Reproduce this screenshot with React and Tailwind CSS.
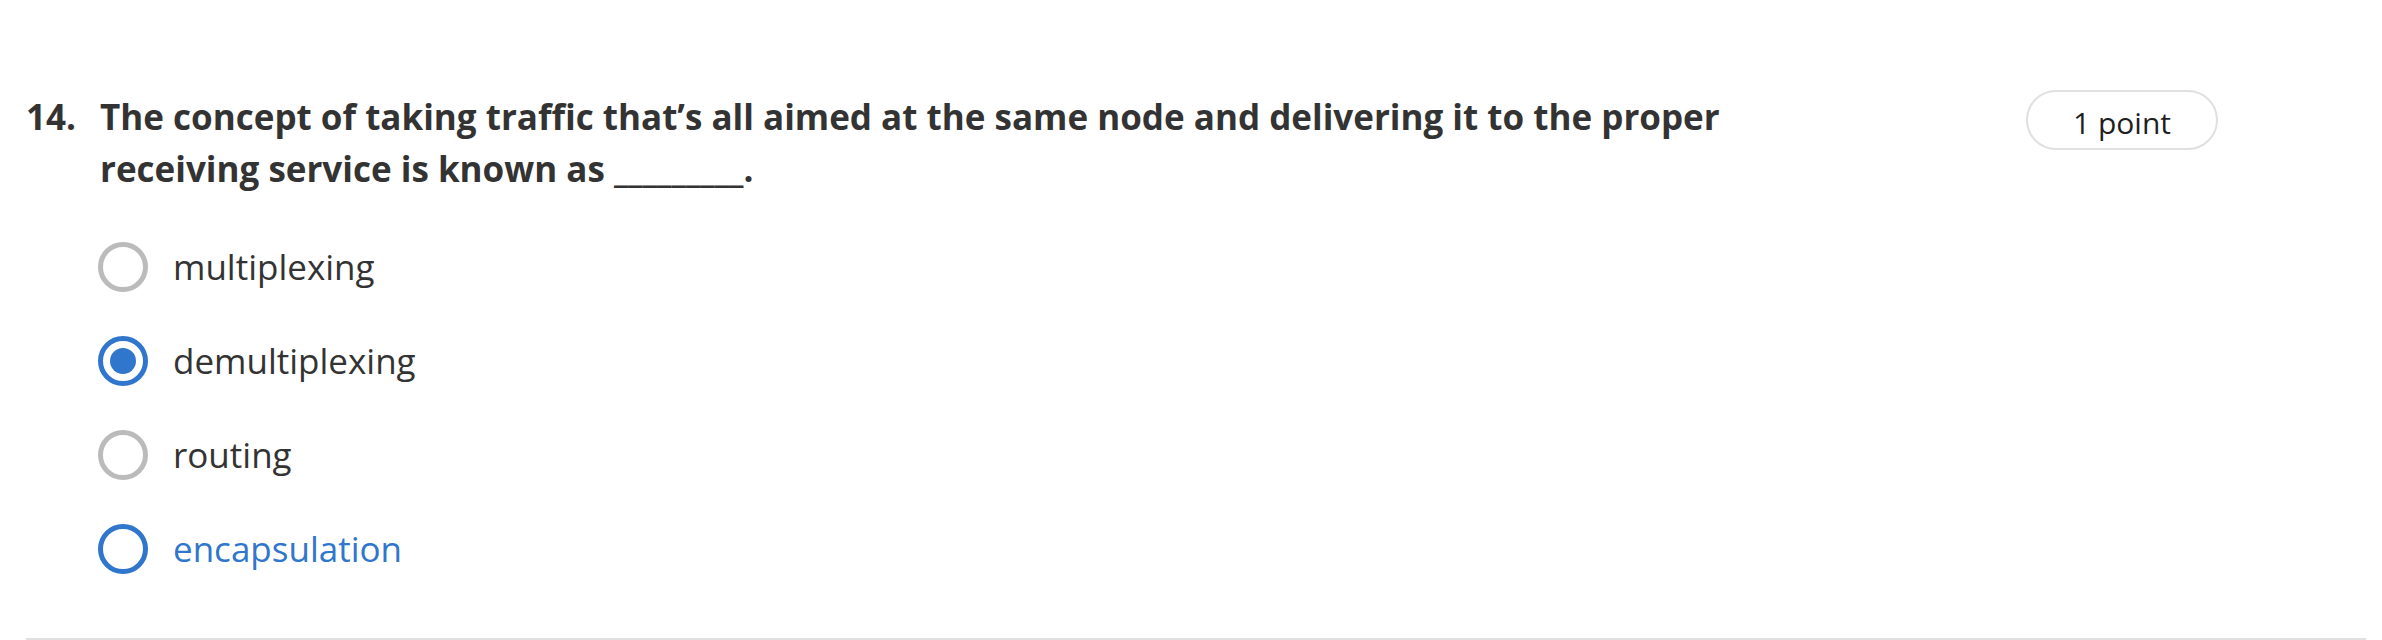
const options = [
  { id: 'multiplexing', tone: 'border-[#bbbbbb] checked:border-[#2f76cc]', text: 'text-[#333333]' },
  { id: 'demultiplexing', tone: 'border-[#bbbbbb] checked:border-[#2f76cc]', text: 'text-[#333333]' },
  { id: 'routing', tone: 'border-[#bbbbbb] checked:border-[#2f76cc]', text: 'text-[#333333]' },
  { id: 'encapsulation', tone: 'border-[#2f76cc]', text: 'text-[#2f76cc]' },
];

function Option({ id, tone, text }) {
  return (
    <label className={`flex items-center gap-[25px] text-[35px] leading-[48px] ${text}`}>
      <span className="grid size-[50px] place-items-center">
        <input
          type="radio"
          name="answer"
          value={id}
          defaultChecked={id === 'demultiplexing'}
          className={`peer col-start-1 row-start-1 size-[50px] appearance-none rounded-full border-[5px] bg-white ${tone}`}
        />
        <span className="pointer-events-none z-10 col-start-1 row-start-1 hidden size-[26px] rounded-full bg-[#2f76cc] peer-checked:block" />
      </span>
      {id}
    </label>
  );
}

export default function App() {
  return (
    <main className="bg-white pt-[90px] pr-4 pl-[26px] font-['Open_Sans',sans-serif] text-[#333333]">
      <section className="border-b-2 border-[#e0e0e0] pb-16">
        <div className="flex items-start">
          <div className="w-[74px] shrink-0 pt-px text-[35px] leading-[52px] font-bold">14.</div>
          <fieldset className="min-w-0 flex-1">
            <legend className="max-w-[1660px] pt-px text-[35px] leading-[52px] font-bold">
              The concept of taking traffic that’s all aimed at the same node and delivering it to the proper
              receiving service is known as _________.
            </legend>
            <div className="-ml-[2px] flex flex-col gap-11 pt-[47px]">
              {options.map((o) => (
                <Option key={o.id} {...o} />
              ))}
            </div>
          </fieldset>
          <div className="mr-[148px] flex h-[60px] w-[192px] shrink-0 items-center justify-center rounded-full border-2 border-[#e0e0e0] pt-1 text-[30px] text-[#1f1f1f]">
            1 point
          </div>
        </div>
      </section>
    </main>
  );
}
